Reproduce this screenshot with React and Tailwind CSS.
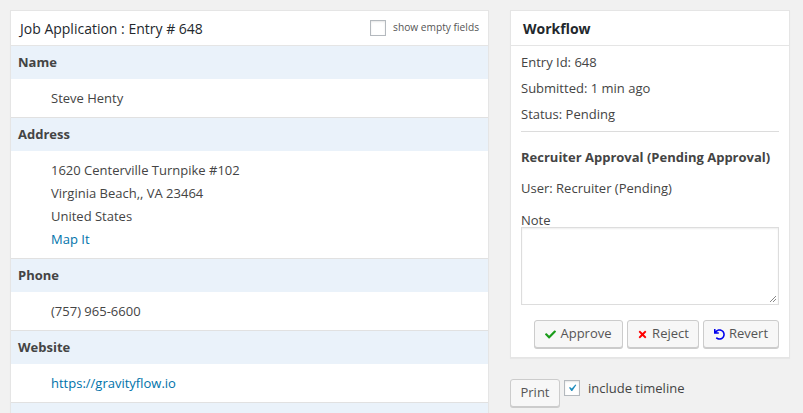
import React from "react";
import { FaCheck, FaTimes, FaUndo } from "react-icons/fa";

const font = { fontFamily: '"Open Sans", sans-serif' };

function Label({ children }) {
  return (
    <div className="h-[33px] bg-[#eaf2fa] px-[7px] flex items-center font-bold text-[13px] text-[#444]">
      {children}
    </div>
  );
}

function Value({ children }) {
  return (
    <div className="pt-[8px] pb-[7px] pl-[40px] border-b border-[#e1e1e1] text-[13px] leading-[23px] text-[#444]">
      {children}
    </div>
  );
}

export default function App() {
  return (
    <div className="w-[803px] h-[413px] overflow-hidden bg-[#f1f1f1] flex gap-[21px] pl-[10px] pt-[10px]" style={font}>
      <div className="w-[479px] shrink-0 bg-white border border-[#e5e5e5] shadow-[0_1px_1px_rgba(0,0,0,0.04)] self-start">
        <div className="h-[35px] border-b border-[#e5e5e5] flex items-center justify-between pl-[9px] pr-[9px]">
          <span className="text-[14px] text-[#23282d]">Job Application : Entry # 648</span>
          <span className="flex items-center gap-[7px]">
            <span className="w-[16px] h-[16px] border border-[#b4b9be] bg-white shadow-[inset_0_1px_2px_rgba(0,0,0,0.1)]" />
            <span className="text-[10.2px] text-[#555]">show empty fields</span>
          </span>
        </div>
        <Label>Name</Label>
        <Value>Steve Henty</Value>
        <Label>Address</Label>
        <Value>
          <div>1620 Centerville Turnpike #102</div>
          <div>Virginia Beach,, VA 23464</div>
          <div>United States</div>
          <div className="text-[#0073aa]">Map It</div>
        </Value>
        <Label>Phone</Label>
        <Value>(757) 965-6600</Value>
        <Label>Website</Label>
        <Value>
          <span className="text-[#0073aa]">https://gravityflow.io</span>
        </Value>
        <Label>&nbsp;</Label>
      </div>

      <div className="w-[280px] shrink-0 flex flex-col">
        <div className="bg-white border border-[#e5e5e5] shadow-[0_1px_1px_rgba(0,0,0,0.04)]">
          <div className="h-[35px] border-b border-[#e5e5e5] flex items-center pl-[12px] font-bold text-[14px] text-[#23282d]">
            Workflow
          </div>
          <div className="px-[10px] pt-[3px] pb-[9px] text-[13px] text-[#444]">
            <div className="leading-[26px]">Entry Id: 648</div>
            <div className="leading-[26px]">Submitted: 1 min ago</div>
            <div className="leading-[26px]">Status: Pending</div>
            <div className="mt-[4px] border-t border-[#dcdcdc]" />
            <div className="mt-[12px] leading-[26px] font-bold">Recruiter Approval (Pending Approval)</div>
            <div className="mt-[5px] leading-[26px]">User: Recruiter (Pending)</div>
            <div className="mt-[12px] leading-[14px]">Note</div>
            <div className="relative h-[78px] border border-[#dddddd] shadow-[inset_0_1px_2px_rgba(0,0,0,0.07)]">
              <svg className="absolute right-[1px] bottom-[1px]" width="8" height="8" viewBox="0 0 8 8">
                <path d="M7 1 L1 7 M7 4 L4 7" stroke="#888" strokeWidth="1" />
              </svg>
            </div>
            <div className="mt-[15px] flex justify-end gap-[4px] pr-[0px]">
              <button className="h-[28px] w-[89px] flex items-center justify-center gap-[4px] rounded-[3px] border border-[#cccccc] bg-[#f7f7f7] shadow-[0_1px_0_#cccccc] text-[13px] text-[#555]">
                <FaCheck className="text-[#1a9c1a] text-[11px]" />
                Approve
              </button>
              <button className="h-[28px] w-[72px] flex items-center justify-center gap-[4px] rounded-[3px] border border-[#cccccc] bg-[#f7f7f7] shadow-[0_1px_0_#cccccc] text-[13px] text-[#555]">
                <FaTimes className="text-[#ff0000] text-[11px]" />
                Reject
              </button>
              <button className="h-[28px] w-[76px] flex items-center justify-center gap-[4px] rounded-[3px] border border-[#cccccc] bg-[#f7f7f7] shadow-[0_1px_0_#cccccc] text-[13px] text-[#555]">
                <FaUndo className="text-[#0000ee] text-[11px]" />
                Revert
              </button>
            </div>
          </div>
        </div>
        <div className="mt-[21px] flex items-start gap-[4px]">
          <button className="mt-[0px] h-[28px] w-[50px] flex items-center justify-center rounded-[3px] border border-[#cccccc] bg-[#f7f7f7] shadow-[0_1px_0_#cccccc] text-[13px] text-[#555]">
            Print
          </button>
          <span className="mt-[1px] w-[16px] h-[16px] border border-[#b4b9be] bg-white shadow-[inset_0_1px_2px_rgba(0,0,0,0.1)] flex items-center justify-center">
            <svg width="14" height="14" viewBox="0 0 20 20">
              <path d="M14.83 4.89l1.34.94-5.81 8.38H9.02L5.78 9.67l1.34-1.25 2.57 2.4z" fill="#1e8cbe" />
            </svg>
          </span>
          <span className="ml-[4px] mt-[0px] text-[13px] text-[#444] leading-[18px]">include timeline</span>
        </div>
      </div>
    </div>
  );
}
